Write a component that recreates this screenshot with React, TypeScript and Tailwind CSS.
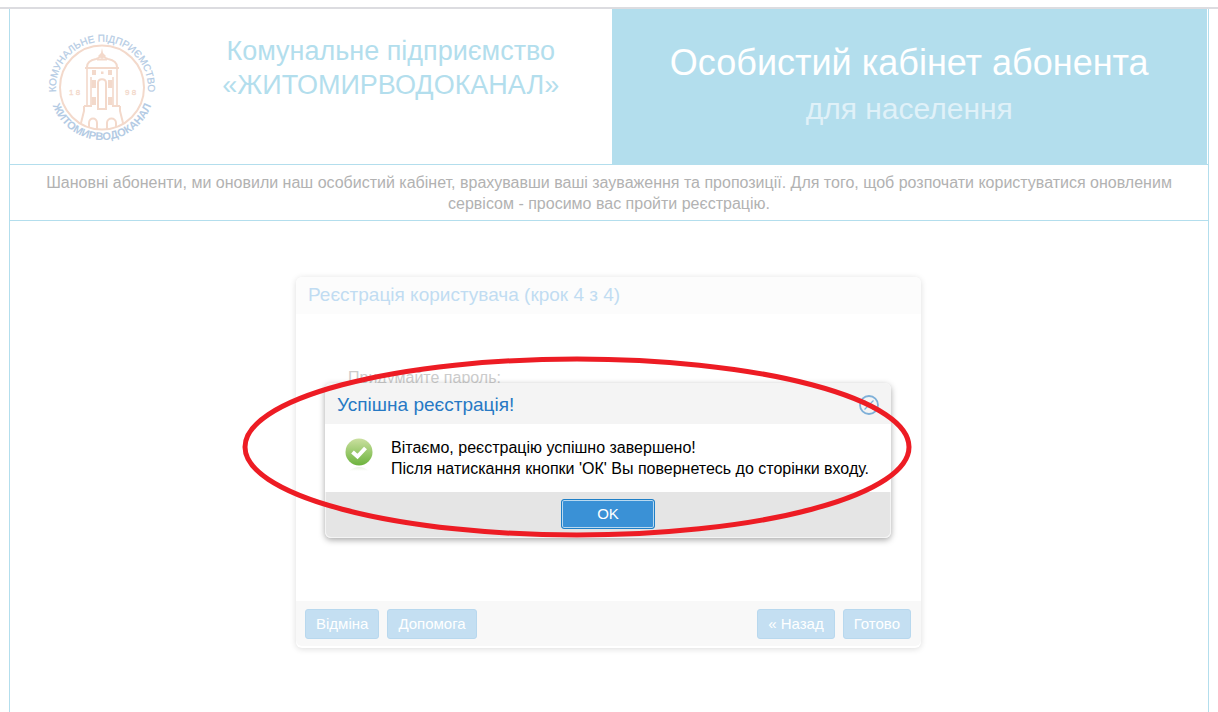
import { useState } from 'react';

function Logo() {
  return (
    <svg viewBox="0 0 125 118" className="w-[125px] h-[118px]" role="img" aria-label="Житомирводоканал">
      <defs>
        <path id="arc-top" d="M 18.7 78.3 A 46 46 0 1 1 105.3 78.3" />
        <path id="arc-bottom" d="M 9.9 69 A 52.5 52.5 0 0 0 114.1 69" />
      </defs>
      <g fill="#b4cbe4" fontFamily="Liberation Sans, Arial, sans-serif">
        <text fontSize="10" textAnchor="middle" stroke="#b4cbe4" strokeWidth="0.2">
          <textPath href="#arc-top" startOffset="50%">КОМУНАЛЬНЕ ПІДПРИЄМСТВО</textPath>
        </text>
        <text fontSize="11" fontWeight="700" textAnchor="middle">
          <textPath href="#arc-bottom" startOffset="50%">ЖИТОМИРВОДОКАНАЛ</textPath>
        </text>
      </g>
      <g fill="none" stroke="#f3d9cb" strokeWidth="2">
        <circle cx="62" cy="62.5" r="42" />
        <path d="M47 42 C47 37 51 35 56 34 C60 33 60 31 62 30 C64 31 64 33 68 34 C73 35 77 37 77 42" />
        <path d="M45 43 H79 M57 34.5 H67" />
        <path d="M47 44 V80 M51 52 V80 M77 44 V80 M73 52 V80" strokeWidth="1.6" />
        <path d="M44 81 H52 M72 81 H80 M44 81 V86 L41 98 M80 81 V86 L83 98" />
        <path d="M58 84 V58 C58 53 66 53 66 58 V84 Z" />
        <path d="M49 102 V98 C49 92 57 92 57 98 V104 M67 104 V98 C67 92 76 92 76 98 V102" />
      </g>
      <g fill="#f3d9cb">
        <path d="M62 23 L63 28 L66 31 L62 34 L58 31 L61 28 Z" />
        <path d="M52 45 H56 V50 H52 Z M68 45 H72 V50 H68 Z M61 46.5 H63.5 V49 H61 Z" />
        <path d="M51.5 55 H56 V63 H51.5 Z M68 55 H72.5 V63 H68 Z" />
        <path d="M51.5 72 H56 V80 H51.5 Z M68 72 H72.5 V80 H68 Z" />
        <g fontSize="8" fontFamily="Liberation Sans, Arial, sans-serif" stroke="#f3d9cb" strokeWidth="0.3">
          <text x="29" y="70">1 8</text>
          <text x="85" y="70">9 8</text>
        </g>
      </g>
    </svg>
  );
}

function SuccessIcon() {
  return (
    <svg viewBox="0 0 32 40" className="w-8 h-10 shrink-0" aria-hidden="true">
      <defs>
        <linearGradient id="ok-fill" x1="0" y1="0" x2="0" y2="1">
          <stop offset="0" stopColor="#cbe0a0" />
          <stop offset="1" stopColor="#6cb33c" />
        </linearGradient>
        <linearGradient id="ok-reflection" x1="0" y1="0" x2="0" y2="1">
          <stop offset="0" stopColor="#e9f3e2" />
          <stop offset="1" stopColor="#ffffff" />
        </linearGradient>
      </defs>
      <path d="M6 34 Q16 26 26 34 Z" fill="url(#ok-reflection)" />
      <circle cx="16" cy="15" r="13.5" fill="url(#ok-fill)" />
      <path d="M9.5 15 L14.5 19.5 L22.5 11" fill="none" stroke="#fff" strokeWidth="4" />
    </svg>
  );
}

const wizardButton =
  'h-[30px] px-[10px] rounded-[3px] border border-[#b8d8ee] bg-[#c4dff2] text-[15px] leading-5 text-white';

export default function App() {
  const [open, setOpen] = useState(true);

  return (
    <div
      className="min-h-screen flex flex-col bg-white pt-[7px] text-base leading-[21px]"
      style={{ fontFamily: '"Liberation Sans", Arial, sans-serif' }}
    >
      <div className="h-0.5 bg-[#dcdce0]" />

      <div className="grow flex flex-col mx-[9px] border-x border-[#b3deed]">
        <header className="grid grid-cols-2 border-b border-[#b3deed] pr-px">
          <div className="flex pl-[30px] pt-4 pb-5">
            <Logo />
            <h2 className="grow pt-[9px] pl-2 text-center text-[27px] leading-[34px] text-[#b3deed]">
              Комунальне підприємство
              <br />
              «ЖИТОМИРВОДОКАНАЛ»
            </h2>
          </div>
          <div className="ml-[3px] bg-[#b3deed] pt-8 pb-[31px] text-center">
            <h1 className="text-4xl leading-[44px] text-white">Особистий кабінет абонента</h1>
            <p className="text-[30px] leading-[48px] text-[#e0f1f8]">для населення</p>
          </div>
        </header>

        <p className="px-5 pt-[7px] pb-[6px] text-center text-[#b2b2b2] border-b border-[#b3deed]">
          Шановні абоненти, ми оновили наш особистий кабінет, врахувавши ваші зауваження та пропозиції. Для того, щоб
          розпочати користуватися оновленим сервісом - просимо вас пройти реєстрацію.
        </p>

        <main className="flex justify-center pt-14 pb-16 pr-px">
          <div className="relative">
            <form
              className="w-[625px] rounded-md border-b-2 border-white bg-white shadow-[0_1px_6px_rgba(0,0,0,0.14)]"
              onSubmit={(e) => e.preventDefault()}
            >
              <h3 className="h-[37px] px-3 rounded-t-md bg-[#fcfcfc] text-[19px] leading-9 text-[#c1dcf2]">
                Реєстрація користувача (крок 4 з 4)
              </h3>
              <div className="h-[287px] px-[52px] pt-[53px]">
                <label htmlFor="password" className="block text-[#cccccc]">
                  Придумайте пароль:
                </label>
                <input id="password" type="password" className="mt-3 h-7 w-60 border border-gray-200" />
              </div>
              <div className="flex h-[45px] items-center gap-2 rounded-b-md bg-[#f8f8f8] pl-[9px] pr-[10px]">
                <button type="button" className={wizardButton}>Відміна</button>
                <button type="button" className={wizardButton}>Допомога</button>
                <button type="button" className={`${wizardButton} ml-auto`}>« Назад</button>
                <button type="submit" className={wizardButton}>Готово</button>
              </div>
            </form>

            {open && (
              <div
                role="dialog"
                aria-labelledby="dialog-title"
                className="absolute left-[29px] top-[106px] w-[566px] rounded-md bg-white shadow-[0_2px_6px_rgba(0,0,0,0.35)]"
              >
                <div className="flex h-[41px] items-center justify-between rounded-t-md bg-[#f4f4f4] px-3 pt-0.5">
                  <h3 id="dialog-title" className="text-[19px] leading-6 text-[#2779c4]">Успішна реєстрація!</h3>
                  <button type="button" aria-label="Закрити" onClick={() => setOpen(false)}>
                    <svg viewBox="0 0 20 20" className="size-5" fill="none" stroke="#7fb0d8">
                      <circle cx="10" cy="10" r="9" strokeWidth="1.8" />
                      <path d="M5.5 5.5 L14.5 14.5 M14.5 5.5 L5.5 14.5" strokeWidth="1.2" />
                    </svg>
                  </button>
                </div>
                <div className="flex h-[68px] gap-4 pl-[18px] pt-[13px]">
                  <SuccessIcon />
                  <p className="whitespace-nowrap text-black">
                    Вітаємо, реєстрацію успішно завершено!
                    <br />
                    Після натискання кнопки 'ОК' Вы повернетесь до сторінки входу.
                  </p>
                </div>
                <div className="flex h-[46px] items-center justify-center rounded-b-md border border-t-0 border-[#f4f4f4] bg-[#e5e5e5] pb-0.5">
                  <button
                    type="button"
                    onClick={() => setOpen(false)}
                    className="h-[30px] w-[94px] rounded-[3px] border border-[#1f7fc6] bg-[#3a91d6] text-[15px] leading-5 text-white shadow-[inset_0_0_0_1px_#b9d9f0]"
                  >
                    OK
                  </button>
                </div>
              </div>
            )}

            <svg
              viewBox="0 0 670 184"
              className="pointer-events-none absolute -left-[54px] top-[78px] h-[184px] w-[670px] max-w-none"
              aria-hidden="true"
            >
              <ellipse cx="335" cy="92" rx="332" ry="88" fill="none" stroke="#ed1c24" strokeWidth="5" />
            </svg>
          </div>
        </main>
      </div>
    </div>
  );
}
